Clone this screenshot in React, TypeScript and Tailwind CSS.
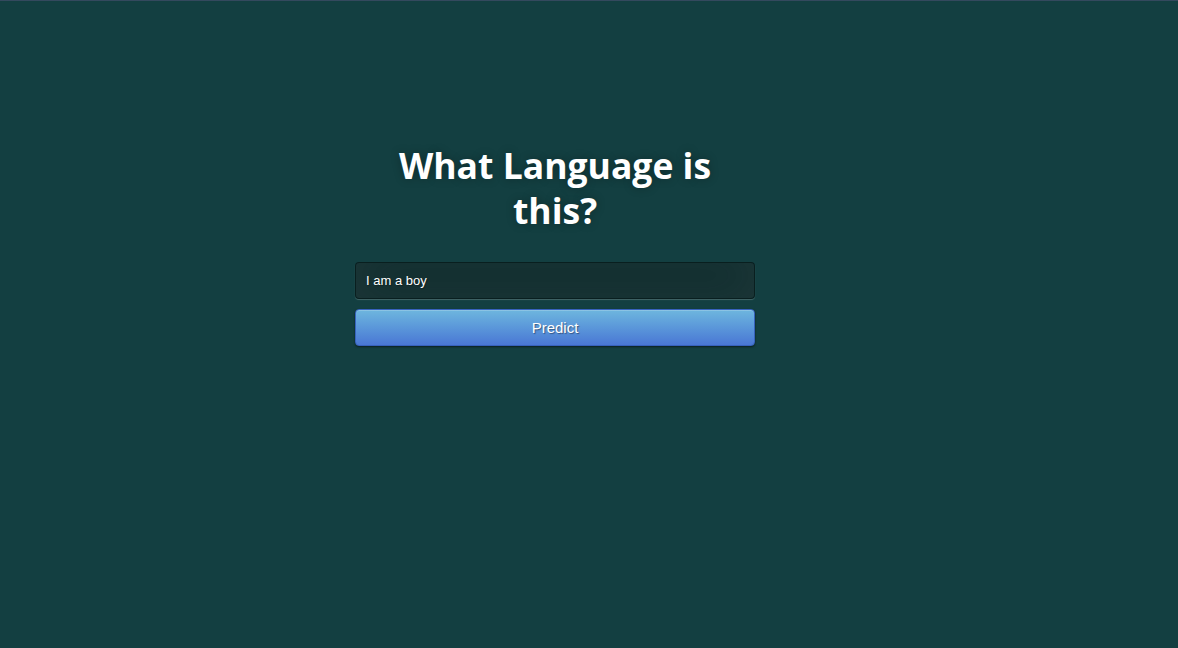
export default function App() {
  return (
    <div className="min-h-[648px] w-full bg-[#133f41] border-t border-[#34495e] flex flex-col">
      <div className="ml-[355px] w-[400px] pt-[142px]">
        <h1
          className="mx-auto w-[330px] text-center text-white font-bold text-[35.5px] leading-[45px] [text-shadow:0_0_10px_rgba(0,0,0,0.3)]"
          style={{ fontFamily: '"Open Sans", sans-serif' }}
        >
          What Language is this?
        </h1>
        <div className="mt-[29px] flex flex-col gap-[10px]" style={{ fontFamily: '"Liberation Sans", Arial, sans-serif' }}>
          <div className="h-[37px] w-full rounded-[4px] border border-[rgba(0,0,0,0.3)] bg-[rgba(0,0,0,0.3)] px-[10px] flex items-center text-[13px] text-white [text-shadow:1px_1px_1px_rgba(0,0,0,0.3)] shadow-[inset_0_-5px_45px_rgba(100,100,100,0.2),0_1px_1px_rgba(255,255,255,0.2)]">
            I am a boy
          </div>
          <div className="h-[37px] w-full rounded-[4px] border border-[#3762bc] bg-gradient-to-b from-[#6eb6de] to-[#4a77d4] flex items-center justify-center pt-px text-[15px] text-white [text-shadow:1px_1px_1px_rgba(0,0,0,0.4)] shadow-[inset_0_1px_0_rgba(255,255,255,0.2),0_1px_2px_rgba(0,0,0,0.5)]">
            Predict
          </div>
        </div>
      </div>
    </div>
  );
}
